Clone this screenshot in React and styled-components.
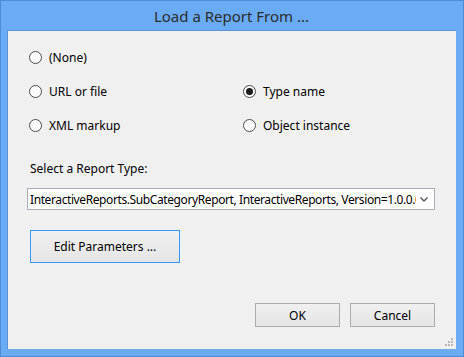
import styled, {createGlobalStyle} from 'styled-components'

const Global = createGlobalStyle`
  html, body { margin: 0; padding: 0; background: #6aabf5; }
  body { font-family: "Segoe UI", "Noto Sans", "Open Sans", sans-serif; }
`

const Window = styled.div`
  width: 464px;
  height: 357px;
  box-sizing: border-box;
  border: 1px solid #4d8bd6;
  background: #6aabf5;
  display: flex;
  flex-direction: column;
  padding: 0 7px 7px 6px;
`

const TitleBar = styled.div`
  height: 29px;
  display: flex;
  align-items: center;
  justify-content: center;
  font-size: 15px;
  color: #2b2b2b;
  padding-top: 1px;
  box-sizing: border-box;
`

const Client = styled.div`
  flex: 1;
  position: relative;
  background: #f0f0f0;
  border-top: 1px solid #5b93d4;
  border-left: 1px solid #5b93d4;
  display: flex;
  flex-direction: column;
  padding: 9px 21px 22px 21px;
  font-size: 12px;
  color: #000;
`

const RadioGrid = styled.div`
  display: grid;
  grid-template-columns: 214px 1fr;
  grid-auto-rows: 34px;
`

const RadioRow = styled.label`
  display: flex;
  align-items: center;
  gap: 7px;
  grid-column: ${p => p.col};
  grid-row: ${p => p.row};
`

const Circle = styled.span`
  width: 13px;
  height: 13px;
  box-sizing: border-box;
  border-radius: 50%;
  border: 1px solid #4a4a4a;
  background: #fff;
  display: flex;
  align-items: center;
  justify-content: center;
  &::after {
    content: '';
    width: 7px;
    height: 7px;
    border-radius: 50%;
    background: #1a1a1a;
    display: ${p => (p.checked ? 'block' : 'none')};
  }
`

const FieldLabel = styled.div`
  margin-top: 19px;
  line-height: 16px;
  margin-left: 1px;
`

const Select = styled.div`
  margin-top: 11px;
  margin-left: -2px;
  width: 408px;
  height: 22px;
  box-sizing: border-box;
  border: 1px solid #abadb3;
  background: #fff;
  display: flex;
  align-items: center;
  padding-left: 2px;
`

const SelectText = styled.span`
  flex: 1;
  overflow: hidden;
  white-space: nowrap;
  letter-spacing: -0.4px;
`

const Chevron = styled.span`
  width: 16px;
  display: flex;
  justify-content: center;
  margin-right: 2px;
`

const Button = styled.button`
  font-family: inherit;
  font-size: 12px;
  color: #000;
  box-sizing: border-box;
  width: ${p => p.w}px;
  height: ${p => p.h}px;
  border: 1px solid ${p => (p.focus ? '#3399ff' : '#acacac')};
  background: linear-gradient(#f0f0f0, #e5e5e5);
  padding: 0;
`

const EditButton = styled(Button)`
  margin-top: 20px;
  margin-left: 1px;
`

const Footer = styled.div`
  margin-top: auto;
  display: flex;
  justify-content: flex-end;
  gap: 10px;
`

const Grip = styled.svg`
  position: absolute;
  right: 2px;
  bottom: 2px;
`

const radios = [
  {label: '(None)', col: 1, row: 1},
  {label: 'URL or file', col: 1, row: 2},
  {label: 'XML markup', col: 1, row: 3},
  {label: 'Type name', col: 2, row: 2, checked: true},
  {label: 'Object instance', col: 2, row: 3},
]

export default function App() {
  return (
    <>
      <Global />
      <Window>
        <TitleBar>Load a Report From ...</TitleBar>
        <Client>
          <RadioGrid>
            {radios.map(r => (
              <RadioRow key={r.label} col={r.col} row={r.row}>
                <Circle checked={r.checked} />
                {r.label}
              </RadioRow>
            ))}
          </RadioGrid>
          <FieldLabel>Select a Report Type:</FieldLabel>
          <Select>
            <SelectText>InteractiveReports.SubCategoryReport, InteractiveReports, Version=1.0.0.0</SelectText>
            <Chevron>
              <svg width="8" height="5" viewBox="0 0 8 5">
                <path d="M0.5 0.5 L4 4 L7.5 0.5" fill="none" stroke="#555" strokeWidth="1.4" />
              </svg>
            </Chevron>
          </Select>
          <EditButton w={150} h={33} focus>Edit Parameters ...</EditButton>
          <Footer>
            <Button w={85} h={24}>OK</Button>
            <Button w={85} h={24}>Cancel</Button>
          </Footer>
          <Grip width="9" height="9" viewBox="0 0 9 9">
            <rect x="6" y="0" width="2" height="2" fill="#b8b8b8" />
            <rect x="3" y="3" width="2" height="2" fill="#b8b8b8" />
            <rect x="6" y="3" width="2" height="2" fill="#b8b8b8" />
            <rect x="0" y="6" width="2" height="2" fill="#b8b8b8" />
            <rect x="3" y="6" width="2" height="2" fill="#b8b8b8" />
            <rect x="6" y="6" width="2" height="2" fill="#b8b8b8" />
          </Grip>
        </Client>
      </Window>
    </>
  )
}
